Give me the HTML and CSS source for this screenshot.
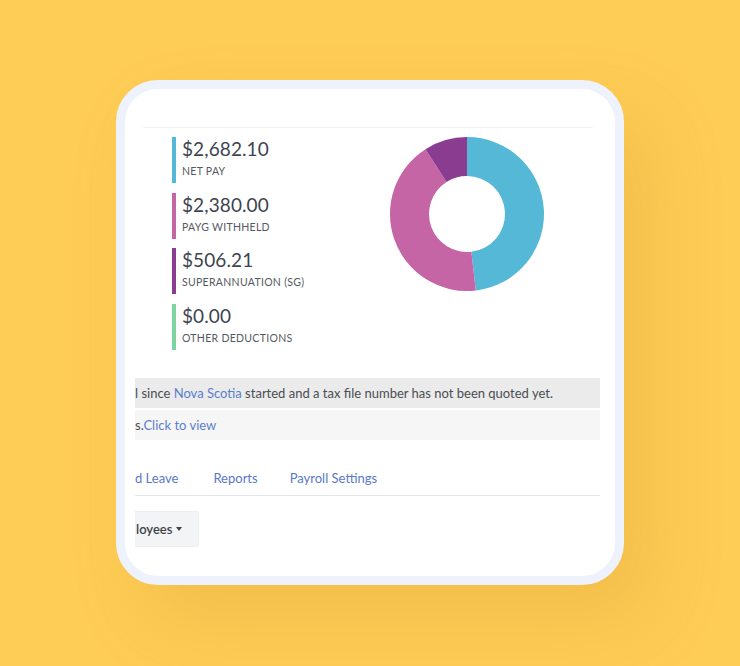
FILE: index.html
```html
<!DOCTYPE html>
<html>
<head>
<meta charset="utf-8">
<link rel="stylesheet" href="styles.css">
</head>
<body>
<div class="stage">
  <div class="card">
    <div class="summary">
      <ul class="stats">
        <li class="stat stat-net"><span class="amount">$2,682.10</span><span class="label">Net Pay</span></li>
        <li class="stat stat-payg"><span class="amount">$2,380.00</span><span class="label">PAYG Withheld</span></li>
        <li class="stat stat-super"><span class="amount">$506.21</span><span class="label">Superannuation (SG)</span></li>
        <li class="stat stat-other"><span class="amount">$0.00</span><span class="label">Other Deductions</span></li>
      </ul>
      <svg class="donut" width="156" height="156" viewBox="-78 -78 156 156">
        <path d="M0 -77 A77 77 0 0 1 8.84 76.49 L4.36 37.75 A38 38 0 0 0 0 -38 Z" fill="#55b8d6"/>
        <path d="M8.84 76.49 A77 77 0 0 1 -41.48 -64.87 L-20.47 -32.01 A38 38 0 0 0 4.36 37.75 Z" fill="#c565a6"/>
        <path d="M-41.48 -64.87 A77 77 0 0 1 0 -77 L0 -38 A38 38 0 0 0 -20.47 -32.01 Z" fill="#8a3c91"/>
      </svg>
    </div>
    <div class="viewport">
      <div class="notice notice-warn">l since <a class="link">Nova Scotia</a> started and a tax file number has not been quoted yet.</div>
      <div class="notice notice-info"><span>s.</span><a class="link">Click to view</a></div>
      <nav class="tabs">
        <a class="tab tab-leave">d Leave</a>
        <a class="tab tab-reports">Reports</a>
        <a class="tab tab-settings">Payroll Settings</a>
      </nav>
      <div class="toolbar">
        <button class="dropdown">loyees <span class="caret"></span></button>
      </div>
    </div>
  </div>
</div>
</body>
</html>
```

FILE: styles.css
```css
html, body {
  margin: 0;
  padding: 0;
  background: #fecd55;
  font-family: "Lato", "Open Sans", sans-serif;
}
.stage {
  width: 740px;
  height: 666px;
  padding: 80px 0 0 116px;
  box-sizing: border-box;
}
.card {
  width: 508px;
  height: 505px;
  box-sizing: border-box;
  border: 9px solid #eef2fc;
  border-radius: 42px;
  background: #fff;
  overflow: hidden;
  box-shadow: 28px 36px 70px rgba(205, 140, 40, 0.22);
}
.summary {
  margin: 38px 22px 0 18px;
  border-top: 1px solid #f1f1f1;
  padding: 9px 0 0 29px;
  display: flex;
  align-items: flex-start;
}
.stats {
  list-style: none;
  margin: 0;
  padding: 0;
  width: 217px;
}
.stat {
  height: 46px;
  border-left: 4px solid #55b8d6;
  padding-left: 6px;
  margin-bottom: 9.5px;
  display: flex;
  flex-direction: column;
  box-sizing: border-box;
}
.stat-payg { border-color: #c565a6; }
.stat-super { border-color: #8a3c91; }
.stat-other { border-color: #7dd4a1; }
.amount {
  font-size: 19px;
  line-height: 24px;
  color: #3e4451;
  letter-spacing: 0.1px;
}
.label {
  font-size: 10.5px;
  line-height: 12px;
  margin-top: 4px;
  text-transform: uppercase;
  color: #555a62;
  letter-spacing: 0.3px;
}
.donut {
  display: block;
  margin-top: -1px;
}
.viewport {
  margin: 19px 0 0 10px;
  width: 465px;
  overflow: hidden;
}
.notice {
  height: 30px;
  line-height: 31px;
  font-size: 13px;
  color: #4a4d52;
  white-space: nowrap;
}
.notice-warn {
  background: #ebebeb;
}
.notice-info {
  background: #f6f6f6;
  margin-top: 2px;
}
.link {
  color: #5a7fcf;
}
.tabs {
  margin-top: 25px;
  display: flex;
  border-bottom: 1px solid #e4e5e8;
  align-items: center;
  padding-bottom: 4px;
  box-sizing: border-box;
  height: 31px;
}
.tab {
  font-size: 13px;
  color: #5a78c8;
}
.tab-reports { margin-left: 35px; }
.tab-settings { margin-left: 32px; }
.toolbar {
  margin-top: 15px;
}
.dropdown {
  width: 64px;
  height: 36px;
  border: 1px solid #eceef1;
  border-left: none;
  background: #f3f4f6;
  border-radius: 0 3px 3px 0;
  font-family: "Lato", sans-serif;
  font-size: 13px;
  font-weight: 600;
  color: #3f4348;
  text-align: left;
  padding: 0 0 0 1px;
  display: flex;
  align-items: center;
}
.caret {
  display: inline-block;
  margin-left: 4px;
  border-left: 3.5px solid transparent;
  border-right: 3.5px solid transparent;
  border-top: 4px solid #3f4348;
}
```
